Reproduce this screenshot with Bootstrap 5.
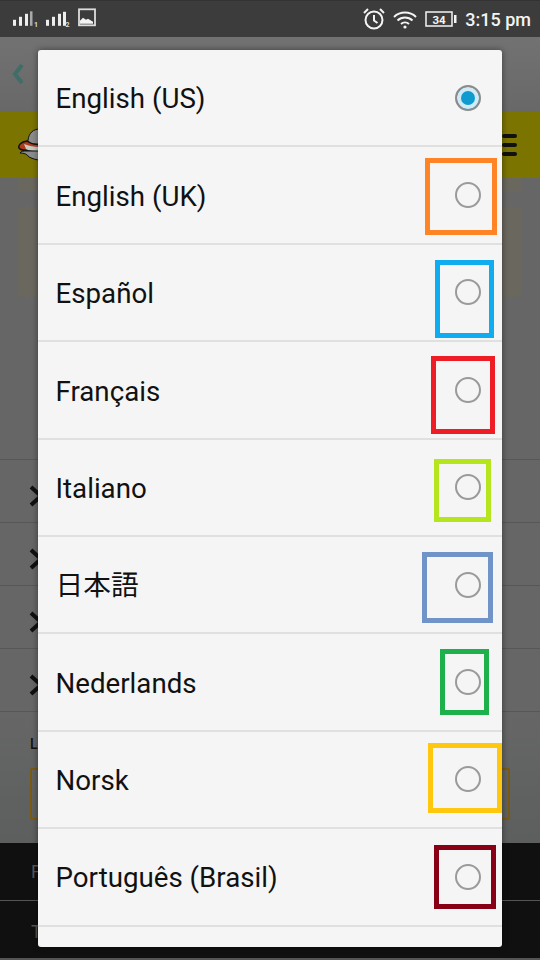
<!DOCTYPE html>
<html lang="en">
<head>
<meta charset="utf-8">
<title>Language</title>
<link rel="stylesheet" href="https://cdn.jsdelivr.net/npm/bootstrap@5.3.0/dist/css/bootstrap.min.css">
<style>
html,body{margin:0;height:960px;overflow:hidden;background:#666;font-family:Roboto,"Noto Sans CJK JP",sans-serif}
.screen{width:540px;height:960px;position:relative;overflow:hidden}
.sbar{height:37px;background:#3c3c3c;color:#f4f4f4;padding:0 9px 0 13px;font-size:18px;font-weight:500;border-top:1px solid #333}
.bk-top{height:74px;background:linear-gradient(#727272,#686868);padding-left:12px}
.bk-band{height:67px;background:#7b7400;padding:0 23px 0 18px}
.bk-body{height:282px;background:#666;padding:0 18px;border-bottom:1px solid #575757}
.bk-stub{height:14px;background:#6a675f}
.bk-card{height:90px;margin-top:15px;background:#6a675f}
.bk-row{height:63px;border-bottom:1px solid #575757;background:#666;padding:9px 0 0 29px}
.bk-form{height:131px;background:linear-gradient(#666,#5c5f5e);padding:22px 30px 0}
.bk-label{font-size:14px;font-weight:500;color:#111;line-height:20px}
.bk-input{height:52px;margin-top:14px;border:2px solid #7a5a10;border-radius:2px}
.bk-foot{height:117px;background:#101010;color:#555;font-size:18px;border-bottom:2px solid #555}
.bk-foot-row{height:58px;border-bottom:1px solid #555;padding-left:31px}
.bk-foot-row+.bk-foot-row{border-bottom:0;padding-top:3px}
.dlg{position:absolute;left:38px;top:50px;width:464px;height:897px;background:#f5f5f5;border-radius:3px;overflow:hidden;box-shadow:0 0 6px rgba(0,0,0,.45)}
.dlg .list-group-item{height:97.4px;padding:0 21px 0 17.5px;background:transparent;border:0;border-bottom:2px solid #e0e0e0;border-radius:0;font-size:27.7px;color:#111;line-height:1}
.opt-name{padding-top:3px}
.dlg .form-check-input{width:26px;height:26px;margin:0;background:#f5f5f5;border:2px solid #9a9a9a;flex:none;opacity:1}
.dlg .form-check-input:checked{background-color:#0f9bd0;border-color:#8c8c8c;background-image:none;box-shadow:inset 0 0 0 4px #d3e9f3}
.mk{position:absolute;border:5px solid;pointer-events:none}
.mk-a{left:387px;top:10.6px;width:72px;height:77px;border-color:#ff8426}
.mk-b{left:397px;top:15.2px;width:59px;height:78px;border-color:#0fadef}
.mk-c{left:393px;top:13.8px;width:64px;height:78px;border-color:#ee1c25}
.mk-d{left:396px;top:19.4px;width:57px;height:63px;border-color:#b5e61d}
.mk-e{left:384px;top:15px;width:71px;height:71px;border-color:#7094c8}
.mk-f{left:402px;top:14.6px;width:49px;height:66px;border-color:#1eb14b}
.mk-g{left:390px;top:11.2px;width:74px;height:70px;border-color:#ffc80e}
.mk-h{left:396px;top:15.8px;width:62px;height:64px;border-color:#880015}
</style>
</head>
<body>
<div class="screen">
  <div class="sbar d-flex align-items-center">
    <svg width="85" height="24" viewBox="0 -1.800 85 24" fill="#eee">
      <rect x="0" y="11" width="3" height="6"/><rect x="6" y="8" width="3" height="9"/><rect x="12" y="5" width="3" height="12"/><rect x="17" y="2.500" width="2.500" height="14.500" fill="#a8a8a8"/><text x="21" y="18" font-family="Roboto" font-size="7" font-weight="700" fill="#ddd">1</text>
      <rect x="33" y="11" width="3" height="6"/><rect x="39" y="8" width="3" height="9"/><rect x="45" y="5" width="3" height="12"/><rect x="50" y="3" width="3" height="14"/><text x="52.500" y="18" font-family="Roboto" font-size="7" font-weight="700" fill="#ddd">2</text>
      <rect x="66" y="0.500" width="16" height="16" fill="none" stroke="#ddd" stroke-width="1.800"/><path d="M67 15v-3l3-3 3 2 2-1 5 3v2z" fill="#f4f4f4"/>
    </svg>
    <div class="d-flex align-items-center ms-auto">
      <svg width="22" height="22" viewBox="0 0 22 22" fill="none" stroke="#f4f4f4" stroke-width="2"><circle cx="11" cy="12" r="8.500"/><path d="M11 7v5.500l3.500 2.500M1 5l4-4M21 5l-4-4"/></svg>
      <svg class="ms-2" width="24" height="19" viewBox="0 0 24 19" fill="none" stroke="#f4f4f4" stroke-width="2"><path d="M1 7a16 16 0 0 1 22 0M4.500 10.500a11 11 0 0 1 15 0M8 14a6 6 0 0 1 8 0"/><circle cx="12" cy="17" r="1.600" fill="#f4f4f4" stroke="none"/></svg>
      <svg class="ms-2" width="32" height="16" viewBox="0 0 32 16"><rect x="1" y="1" width="26" height="14" fill="none" stroke="#f4f4f4" stroke-width="1.500"/><rect x="29" y="4" width="2.500" height="8" fill="#f4f4f4"/><text x="14" y="12.500" font-family="Roboto" font-size="11.500" font-weight="700" fill="#f4f4f4" text-anchor="middle">34</text></svg>
      <span class="ms-2">3:15 pm</span>
    </div>
  </div>
  <div class="bk-top d-flex align-items-center"><svg width="12" height="22" viewBox="0 0 12 22" fill="none" stroke="#3f6d68" stroke-width="4"><path d="M10 2 3 11l7 9"/></svg></div>
  <div class="bk-band d-flex align-items-center justify-content-between">
    <svg width="22" height="36" viewBox="0 0 22 36"><path d="M10 13c1-7 5-11 12-11v22H9z" fill="#8c8c8c" stroke="#111" stroke-width="1"/><path d="M9 14C3 15 0 18 1 21c2 3 10 3 21 3v-7c-5 1-9 0-13-3z" fill="#b03a1c" stroke="#111" stroke-width="1.500"/><path d="M6 17c5 2 10 3 16 3v4c-6 0-11 0-14-2z" fill="#c9c9c0"/><path d="M2 26c4 0 7 1 9 4 4 2 8 3 11 3v-9H8c-2 0-5 0-6 2z" fill="#8c8c8c" stroke="#111" stroke-width="1"/></svg>
    <svg width="15" height="22" viewBox="0 0 15 22" fill="#111"><rect width="15" height="4" rx="2"/><rect y="9" width="15" height="4" rx="2"/><rect y="18" width="15" height="4" rx="2"/></svg>
  </div>
  <div class="bk-body"><div class="bk-stub"></div><div class="bk-card"></div></div>
  <div class="bk-row d-flex align-items-center"><svg width="12" height="24" viewBox="0 0 12 24" fill="none" stroke="#111" stroke-width="4"><path d="M2 3l10 9-10 9"/></svg></div>
  <div class="bk-row d-flex align-items-center"><svg width="12" height="24" viewBox="0 0 12 24" fill="none" stroke="#111" stroke-width="4"><path d="M2 3l10 9-10 9"/></svg></div>
  <div class="bk-row d-flex align-items-center"><svg width="12" height="24" viewBox="0 0 12 24" fill="none" stroke="#111" stroke-width="4"><path d="M2 3l10 9-10 9"/></svg></div>
  <div class="bk-row d-flex align-items-center"><svg width="12" height="24" viewBox="0 0 12 24" fill="none" stroke="#111" stroke-width="4"><path d="M2 3l10 9-10 9"/></svg></div>
  <div class="bk-form"><div class="bk-label">L</div><div class="bk-input"></div></div>
  <div class="bk-foot">
    <div class="bk-foot-row d-flex align-items-center">F</div>
    <div class="bk-foot-row d-flex align-items-center">T</div>
  </div>

  <div class="dlg">
    <div class="list-group">
      <label class="list-group-item d-flex align-items-center justify-content-between position-relative"><span class="opt-name">English (US)</span><input class="form-check-input" type="radio" name="lang" checked></label>
      <label class="list-group-item d-flex align-items-center justify-content-between position-relative"><span class="opt-name">English (UK)</span><input class="form-check-input" type="radio" name="lang"><span class="mk mk-a"></span></label>
      <label class="list-group-item d-flex align-items-center justify-content-between position-relative"><span class="opt-name">Español</span><input class="form-check-input" type="radio" name="lang"><span class="mk mk-b"></span></label>
      <label class="list-group-item d-flex align-items-center justify-content-between position-relative"><span class="opt-name">Français</span><input class="form-check-input" type="radio" name="lang"><span class="mk mk-c"></span></label>
      <label class="list-group-item d-flex align-items-center justify-content-between position-relative"><span class="opt-name">Italiano</span><input class="form-check-input" type="radio" name="lang"><span class="mk mk-d"></span></label>
      <label class="list-group-item d-flex align-items-center justify-content-between position-relative"><span class="opt-name">日本語</span><input class="form-check-input" type="radio" name="lang"><span class="mk mk-e"></span></label>
      <label class="list-group-item d-flex align-items-center justify-content-between position-relative"><span class="opt-name">Nederlands</span><input class="form-check-input" type="radio" name="lang"><span class="mk mk-f"></span></label>
      <label class="list-group-item d-flex align-items-center justify-content-between position-relative"><span class="opt-name">Norsk</span><input class="form-check-input" type="radio" name="lang"><span class="mk mk-g"></span></label>
      <label class="list-group-item d-flex align-items-center justify-content-between position-relative"><span class="opt-name">Português (Brasil)</span><input class="form-check-input" type="radio" name="lang"><span class="mk mk-h"></span></label>
    </div>
  </div>
</div>
<script src="https://cdn.jsdelivr.net/npm/bootstrap@5.3.0/dist/js/bootstrap.bundle.min.js"></script>
</body>
</html>
